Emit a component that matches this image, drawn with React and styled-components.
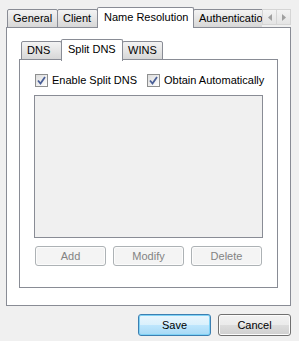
import React from 'react'
import styled, { createGlobalStyle } from 'styled-components'

const GlobalStyle = createGlobalStyle`
  html, body {
    margin: 0;
    padding: 0;
    background: #f0f0f0;
  }
  * {
    box-sizing: border-box;
  }
`

const Page = styled.div`
  width: 299px;
  height: 341px;
  padding: 6px 8px 0 6px;
  background: #f0f0f0;
  font-family: 'Liberation Sans', Arial, sans-serif;
  font-size: 11px;
  color: #000;
  display: flex;
  flex-direction: column;
`

const TabBar = styled.div`
  display: flex;
  align-items: flex-end;
  height: ${(p) => p.height}px;
  padding-left: ${(p) => p.inset}px;
  position: relative;
  z-index: 1;
`

const TabViewport = styled.div`
  display: flex;
  align-items: flex-end;
  height: 100%;
  width: ${(p) => p.width}px;
  overflow: hidden;
`

const Tab = styled.div`
  flex: 0 0 auto;
  width: ${(p) => p.width}px;
  height: ${(p) => (p.active ? p.tall : p.tall - 3)}px;
  margin-bottom: ${(p) => (p.active ? -1 : 0)}px;
  margin-left: -1px;
  padding: ${(p) => (p.active ? '3px 0 0 6px' : '2px 0 0 5px')};
  border: 1px solid #898c95;
  border-bottom: ${(p) => (p.active ? 'none' : '1px solid #898c95')};
  border-radius: 2px 2px 0 0;
  background: ${(p) =>
    p.active ? '#ffffff' : 'linear-gradient(#f3f3f3, #e7e7e7 45%, #d7d7d7)'};
  white-space: nowrap;
  overflow: hidden;
  line-height: 13px;
  &:first-child {
    margin-left: 0;
  }
`

const Arrows = styled.div`
  display: flex;
  margin-bottom: 3px;
  margin-left: 1px;
`

const ArrowButton = styled.div`
  width: 15px;
  height: 16px;
  display: flex;
  align-items: center;
  justify-content: center;
  background: linear-gradient(#f3f3f3, #e4e4e4);
  border: 1px solid #d5d5d5;
  margin-left: -1px;
`

const Panel = styled.div`
  border: 1px solid #898c95;
  background: #fff;
  width: ${(p) => p.width}px;
  height: ${(p) => p.height}px;
  margin-top: -1px;
  padding: ${(p) => p.pad};
  display: flex;
  flex-direction: column;
`

const CheckRow = styled.div`
  display: flex;
  align-items: center;
  height: 13px;
  margin: 14px 0 0 15px;
`

const CheckLabel = styled.label`
  display: flex;
  align-items: center;
  gap: 4px;
  width: ${(p) => p.width}px;
  line-height: 13px;
`

const Box = styled.span`
  width: 13px;
  height: 13px;
  border: 1px solid #8e8f8f;
  background: linear-gradient(135deg, #dcdcdc, #f4f4f4 70%, #ffffff);
  display: flex;
  align-items: center;
  justify-content: center;
  padding: 1px;
`

const ListBox = styled.div`
  width: 229px;
  height: 143px;
  margin: 8px 0 0 14px;
  border: 1px solid #898c95;
  background: #f0f0f0;
`

const ButtonRow = styled.div`
  display: flex;
  gap: ${(p) => p.gap}px;
  margin: ${(p) => p.margin};
  justify-content: ${(p) => p.justify || 'flex-start'};
`

const Button = styled.div`
  width: ${(p) => p.width}px;
  height: ${(p) => p.height}px;
  display: flex;
  align-items: center;
  justify-content: center;
  border-radius: 3px;
  border: 1px solid ${(p) => (p.disabled ? '#adb2b5' : p.primary ? '#3c7fb1' : '#707070')};
  color: ${(p) => (p.disabled ? '#838383' : '#000')};
  background: ${(p) =>
    p.disabled
      ? '#f4f4f4'
      : p.primary
      ? 'linear-gradient(#eaf6fd, #d9f0fc 50%, #bee6fd 50%, #a7d9f5)'
      : 'linear-gradient(#f2f2f2, #ebebeb 50%, #dddddd 50%, #cfcfcf)'};
  box-shadow: ${(p) => (p.primary ? 'inset 0 0 0 1px #7fd2f6' : 'inset 0 0 0 1px #fcfcfc')};
`

const Check = () => (
  <Box>
    <svg width="9" height="9" viewBox="0 0 9 9">
      <path
        d="M1 4.5 L3.5 7.5 L8 1"
        fill="none"
        stroke="#4a5f97"
        strokeWidth="1.8"
      />
    </svg>
  </Box>
)

const Arrow = ({ dir }) => (
  <svg width="4" height="7" viewBox="0 0 4 7">
    <path d={dir === 'left' ? 'M4 0 L0 3.5 L4 7 Z' : 'M0 0 L4 3.5 L0 7 Z'} fill="#a0a0a0" />
  </svg>
)

export default function App() {
  return (
    <Page>
      <GlobalStyle />
      <TabBar height={22} inset={1}>
        <TabViewport width={255}>
          <Tab tall={22} width={51}>General</Tab>
          <Tab tall={22} width={41}>Client</Tab>
          <Tab tall={22} width={97} active>
            Name Resolution
          </Tab>
          <Tab tall={22} width={72}>Authentication</Tab>
        </TabViewport>
        <Arrows>
          <ArrowButton>
            <Arrow dir="left" />
          </ArrowButton>
          <ArrowButton>
            <Arrow dir="right" />
          </ArrowButton>
        </Arrows>
      </TabBar>
      <Panel width={285} height={279} pad="10px 0 0 12px">
        <TabBar height={22} inset={2}>
          <Tab tall={22} width={41}>DNS</Tab>
          <Tab tall={22} width={62} active>
            Split DNS
          </Tab>
          <Tab tall={22} width={41}>WINS</Tab>
        </TabBar>
        <Panel width={259} height={229} pad="0">
          <CheckRow>
            <CheckLabel width={112}>
              <Check />
              Enable Split DNS
            </CheckLabel>
            <CheckLabel width={120}>
              <Check />
              Obtain Automatically
            </CheckLabel>
          </CheckRow>
          <ListBox />
          <ButtonRow gap={7} margin="8px 0 0 15px">
            <Button width={71} height={20} disabled>
              Add
            </Button>
            <Button width={71} height={20} disabled>
              Modify
            </Button>
            <Button width={71} height={20} disabled>
              Delete
            </Button>
          </ButtonRow>
        </Panel>
      </Panel>
      <ButtonRow gap={7} margin="8px 0 0 0" justify="flex-end">
        <Button width={73} height={22} primary>
          Save
        </Button>
        <Button width={73} height={22}>
          Cancel
        </Button>
      </ButtonRow>
    </Page>
  )
}
